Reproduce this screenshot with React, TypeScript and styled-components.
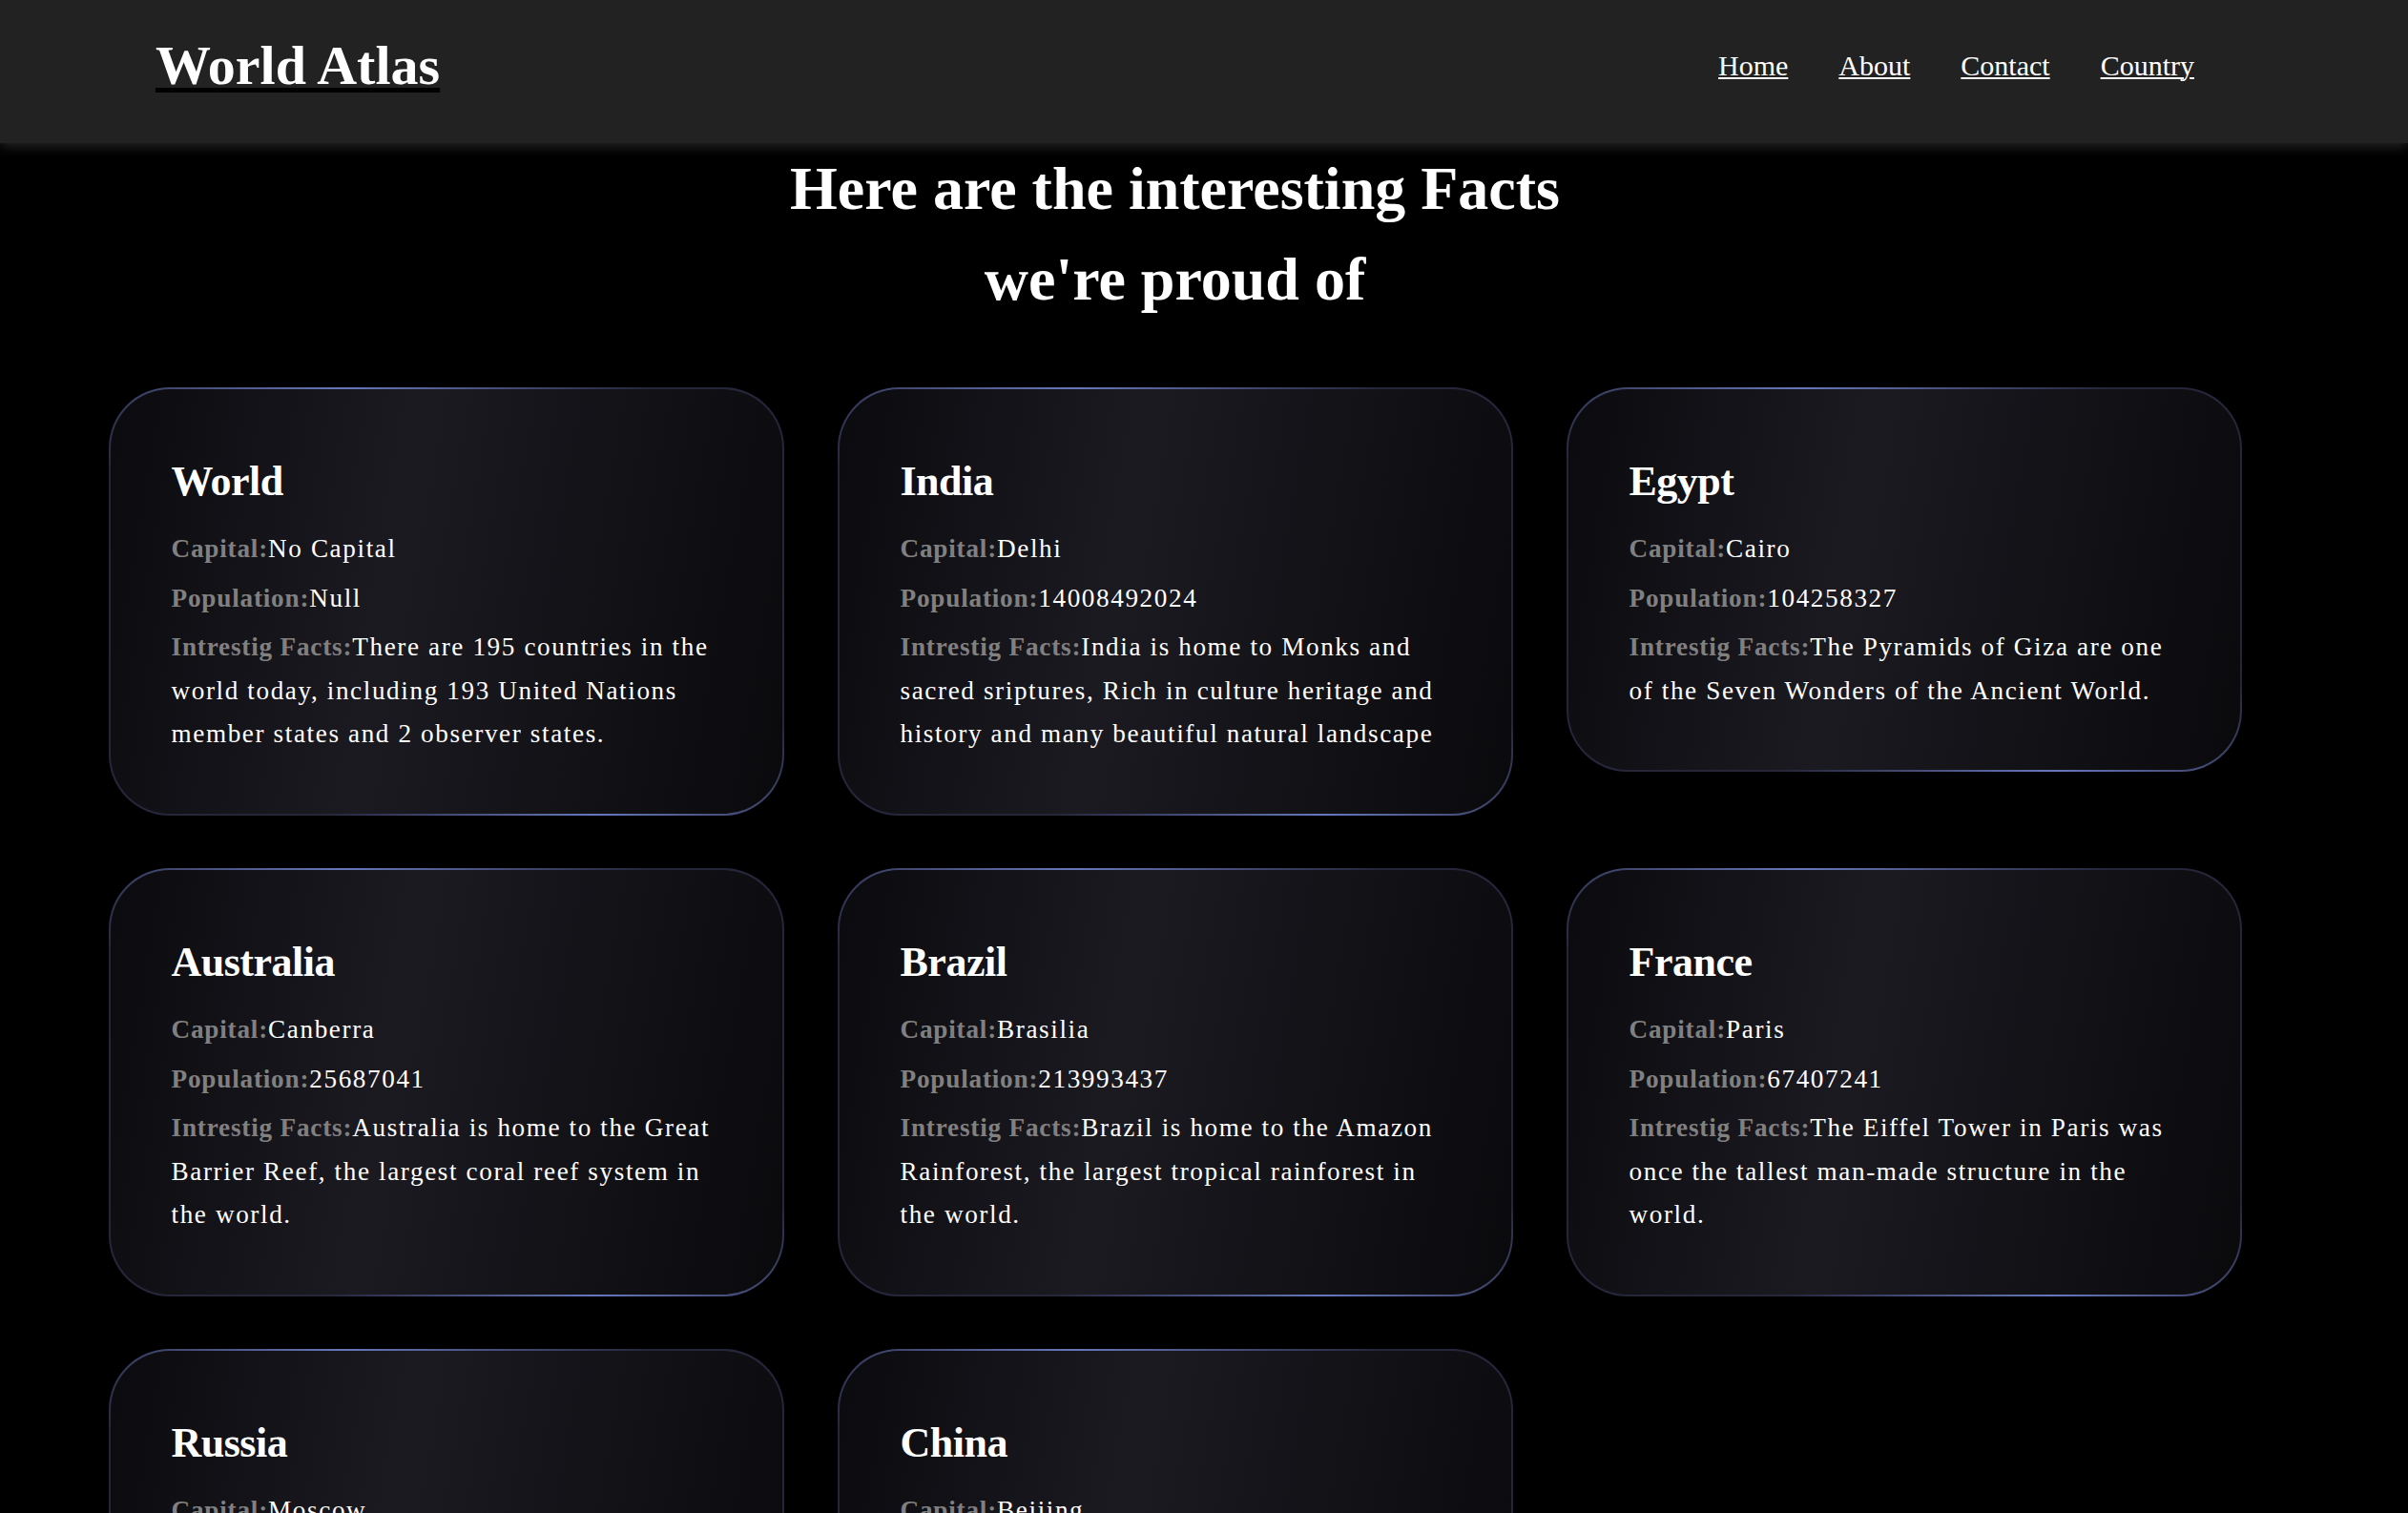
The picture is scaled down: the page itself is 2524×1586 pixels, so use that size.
import styled, { createGlobalStyle } from "styled-components"

const GlobalStyle = createGlobalStyle`
  html, body {
    margin: 0;
    padding: 0;
    background: #000;
    color: #fff;
    font-family: "Liberation Serif", "Times New Roman", serif;
  }
  * {
    box-sizing: border-box;
  }
`

type Country = {
  name: string
  capital: string
  population: string
  facts: string
}

const countries: Country[] = [
  {
    name: "World",
    capital: "No Capital",
    population: "Null",
    facts:
      "There are 195 countries in the world today, including 193 United Nations member states and 2 observer states.",
  },
  {
    name: "India",
    capital: "Delhi",
    population: "14008492024",
    facts:
      "India is home to Monks and sacred sriptures, Rich in culture heritage and history and many beautiful natural landscape",
  },
  {
    name: "Egypt",
    capital: "Cairo",
    population: "104258327",
    facts: "The Pyramids of Giza are one of the Seven Wonders of the Ancient World.",
  },
  {
    name: "Australia",
    capital: "Canberra",
    population: "25687041",
    facts:
      "Australia is home to the Great Barrier Reef, the largest coral reef system in the world.",
  },
  {
    name: "Brazil",
    capital: "Brasilia",
    population: "213993437",
    facts:
      "Brazil is home to the Amazon Rainforest, the largest tropical rainforest in the world.",
  },
  {
    name: "France",
    capital: "Paris",
    population: "67407241",
    facts:
      "The Eiffel Tower in Paris was once the tallest man-made structure in the world.",
  },
  {
    name: "Russia",
    capital: "Moscow",
    population: "144104080",
    facts:
      "Russia is the largest country in the world, spanning eleven time zones across Europe and Asia.",
  },
  {
    name: "China",
    capital: "Beijing",
    population: "1412600000",
    facts:
      "The Great Wall of China is one of the longest structures ever built by humans.",
  },
]

const Header = styled.header`
  position: relative;
  z-index: 2;
  height: 150px;
  padding: 0 61px 13px 0;
  display: flex;
  align-items: center;
  background: #222222;
  box-shadow: 0 3px 12px rgba(48, 48, 48, 0.85);
`

const HeaderInner = styled.div`
  width: 2137px;
  margin: 0 auto;
  display: flex;
  align-items: center;
  justify-content: space-between;
`

const Logo = styled.a`
  font-size: 58px;
  font-weight: 700;
  color: #fff;
  text-decoration: underline;
  text-decoration-color: #000;
  text-decoration-thickness: 5px;
  text-underline-offset: 4px;
  cursor: pointer;
`

const Nav = styled.nav`
  display: flex;
  align-items: center;
  gap: 53px;
`

const NavLink = styled.a`
  font-size: 30px;
  color: #fff;
  text-decoration: underline;
  text-decoration-thickness: 2px;
  text-underline-offset: 2px;
  cursor: pointer;
`

const Main = styled.main`
  padding: 0 61px 80px 0;
`

const Heading = styled.h2`
  margin: 0;
  text-align: center;
  font-size: 64px;
  font-weight: 700;
  line-height: 95px;
`

const Grid = styled.section`
  width: 2236px;
  margin: 66px auto 0;
  display: grid;
  grid-template-columns: repeat(3, 708px);
  gap: 55px 56px;
  align-items: start;
`

const Card = styled.article`
  border: 2px solid transparent;
  border-radius: 64px;
  padding: 64px 64px 60px;
  background:
    linear-gradient(
        100deg,
        #0b0a0e 0%,
        #16151b 28%,
        #1b1a21 42%,
        #141318 66%,
        #0a090c 100%
      )
      padding-box,
    radial-gradient(45% 30% at 35% 0%, #6777bb 0%, rgba(103, 119, 187, 0) 100%) border-box,
    radial-gradient(40% 30% at 72% 100%, #6777bb 0%, rgba(103, 119, 187, 0) 100%) border-box,
    linear-gradient(#25263a, #25263a) border-box;
`

const CardTitle = styled.h3`
  margin: 0 0 15px;
  font-size: 44px;
  font-weight: 700;
  line-height: 66px;
  letter-spacing: -0.5px;
`

const Line = styled.p`
  margin: 0 0 6px;
  font-size: 27.2px;
  line-height: 45.6px;
  letter-spacing: 1.6px;
  color: #fff;

  &:last-child {
    margin-bottom: 0;
  }
`

const Label = styled.span`
  font-weight: 700;
  color: #808080;
  letter-spacing: 0.8px;
`

const CountryCard = ({ country }: { country: Country }) => {
  return (
    <Card>
      <CardTitle>{country.name}</CardTitle>
      <Line>
        <Label>Capital:</Label>
        {country.capital}
      </Line>
      <Line>
        <Label>Population:</Label>
        {country.population}
      </Line>
      <Line>
        <Label>Intrestig Facts:</Label>
        {country.facts}
      </Line>
    </Card>
  )
}

const App = () => {
  return (
    <>
      <GlobalStyle />
      <Header>
        <HeaderInner>
          <Logo>World Atlas</Logo>
          <Nav>
            <NavLink>Home</NavLink>
            <NavLink>About</NavLink>
            <NavLink>Contact</NavLink>
            <NavLink>Country</NavLink>
          </Nav>
        </HeaderInner>
      </Header>
      <Main>
        <Heading>
          Here are the interesting Facts
          <br />
          we're proud of
        </Heading>
        <Grid>
          {countries.map((c) => (
            <CountryCard key={c.name} country={c} />
          ))}
        </Grid>
      </Main>
    </>
  )
}

export default App
